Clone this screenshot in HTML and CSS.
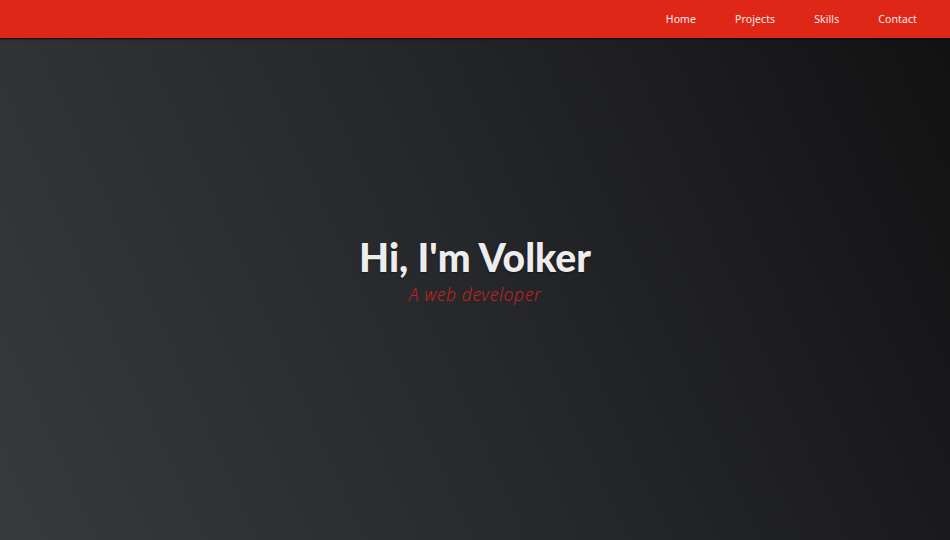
FILE: index.html
```html
<!DOCTYPE html>
<html lang="en">
<head>
<meta charset="utf-8">
<title>Volker</title>
<link rel="stylesheet" href="styles.css">
</head>
<body>
<header class="navbar">
  <nav class="nav">
    <a href="#" class="nav-link">Home</a>
    <a href="#" class="nav-link">Projects</a>
    <a href="#" class="nav-link">Skills</a>
    <a href="#" class="nav-link">Contact</a>
  </nav>
</header>
<main class="hero">
  <div class="hero-text">
    <h1 class="title">Hi, I'm Volker</h1>
    <p class="subtitle">A web developer</p>
  </div>
</main>
</body>
</html>
```
FILE: styles.css
```css
* { box-sizing: border-box; }
html, body { margin: 0; padding: 0; height: 100%; }
body {
  width: 950px;
  height: 540px;
  overflow: hidden;
  display: flex;
  flex-direction: column;
  background: linear-gradient(66deg, #38393d 0%, #26272a 50%, #111112 100%);
  font-family: "Noto Sans", sans-serif;
}
.navbar {
  position: relative;
  z-index: 2;
  height: 38px;
  flex: 0 0 38px;
  background: #df2718;
  box-shadow: 0 1px 2px rgba(0,0,0,0.8);
  display: flex;
  justify-content: flex-end;
  align-items: center;
}
.nav {
  display: flex;
  gap: 39px;
  padding-right: 33px;
}
.nav-link {
  color: #fbeae8;
  text-decoration: none;
  font-family: "Noto Sans", sans-serif;
  font-size: 10.5px;
  letter-spacing: 0.1px;
}
.hero {
  flex: 1;
  display: flex;
  align-items: center;
  justify-content: center;
  padding-bottom: 38px;
}
.hero-text { text-align: center; }
.title {
  margin: 0;
  font-family: "Lato", sans-serif;
  font-weight: 900;
  font-size: 39px;
  line-height: 44px;
  color: #ededed;
  text-shadow: 0 1px 2px rgba(0,0,0,0.4);
}
.subtitle {
  margin: 3px 0 0;
  font-family: "Noto Sans", sans-serif;
  font-style: italic;
  font-weight: 300;
  font-size: 17.5px;
  letter-spacing: 0.6px;
  line-height: 24px;
  color: #c4221b;
}
```
